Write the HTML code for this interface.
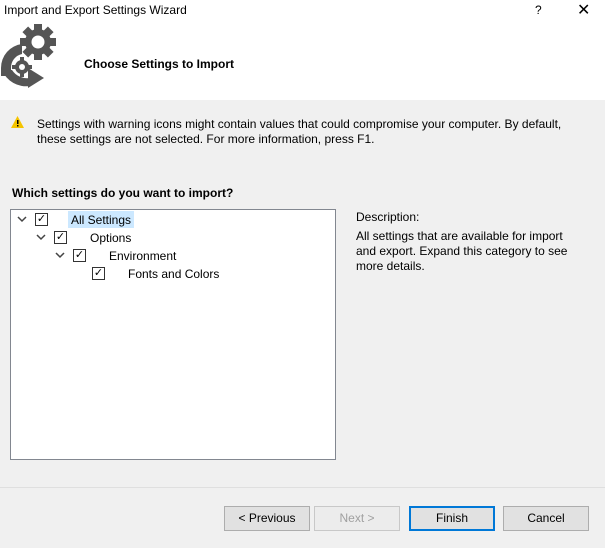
<!DOCTYPE html>
<html><head><style>
body{margin:0;width:605px;height:548px;background:#f0f0f0;font-family:"Liberation Sans",sans-serif;font-size:12px;color:#000;position:relative;overflow:hidden}
.a{position:absolute;white-space:nowrap}
.cb{position:absolute;width:11px;height:11px;border:1px solid #333;background:#fff;font-size:11px;line-height:11px;text-align:center}
.chev{position:absolute;width:12px;height:8px}
.btn{position:absolute;top:506px;height:23px;border:1px solid #adadad;background:#e1e1e1;text-align:center;line-height:23px;font-size:12px;box-sizing:border-box}
</style></head><body>
<div class="a" style="left:0;top:0;width:605px;height:100px;background:#fff"></div>
<div class="a" style="left:4px;top:3px">Import and Export Settings Wizard</div>
<div class="a" style="left:535px;top:3px">?</div>
<div class="a" style="left:577px;top:0px;font-size:16px">✕</div>
<svg class="a" style="left:0;top:24px" width="60" height="66" viewBox="0 0 60 66">
<g fill="#555">
<circle cx="38" cy="18" r="13"/>
<g transform="translate(38 18)"><rect x="-4" y="-18" width="8" height="36"/><rect x="-18" y="-4" width="36" height="8"/><rect x="-4" y="-18" width="8" height="36" transform="rotate(45)"/><rect x="-4" y="-18" width="8" height="36" transform="rotate(-45)"/></g>
<path d="M22 20 A24 24 0 0 0 1 44 L1 52 L11 52 L11 44 A14 14 0 0 1 22 30Z"/>
<path d="M2 46 A26 26 0 0 0 30 62 L30 54 A18 18 0 0 1 12 46Z"/>
<path d="M28 44 L44 54 L28 64 Z"/>
<circle cx="22" cy="43" r="7"/>
<g transform="translate(22 43)"><rect x="-2" y="-10" width="4" height="20"/><rect x="-10" y="-2" width="20" height="4"/></g>
</g>
<circle cx="38" cy="18" r="6.5" fill="#fff"/>
<circle cx="22" cy="43" r="3" fill="#fff"/>
</svg>
<div class="a" style="left:84px;top:57px;font-weight:bold">Choose Settings to Import</div>
<svg class="a" style="left:11px;top:116px" width="13" height="12"><path d="M6.5 0 L13 12 L0 12Z" fill="#f5c400"/><rect x="6" y="4" width="1.5" height="4" fill="#000"/><rect x="6" y="9" width="1.5" height="1.5" fill="#000"/></svg>
<div class="a" style="left:37px;top:117px;line-height:15px">Settings with warning icons might contain values that could compromise your computer. By default,<br>these settings are not selected. For more information, press F1.</div>
<div class="a" style="left:12px;top:186px;font-weight:bold">Which settings do you want to import?</div>
<div class="a" style="left:10px;top:209px;width:324px;height:249px;background:#fff;border:1px solid #828790"></div>
<div class="a" style="left:68px;top:211px;width:66px;height:17px;background:#cce8ff"></div>
<svg class="chev" style="left:16px;top:216px"><path d="M2 1 L6 5 L10 1" stroke="#444" stroke-width="1.5" fill="none"/></svg><div class="cb" style="left:35px;top:213px">✓</div><div class="a" style="left:71px;top:213px">All Settings</div>
<svg class="chev" style="left:35px;top:234px"><path d="M2 1 L6 5 L10 1" stroke="#444" stroke-width="1.5" fill="none"/></svg><div class="cb" style="left:54px;top:231px">✓</div><div class="a" style="left:90px;top:231px">Options</div>
<svg class="chev" style="left:54px;top:252px"><path d="M2 1 L6 5 L10 1" stroke="#444" stroke-width="1.5" fill="none"/></svg><div class="cb" style="left:73px;top:249px">✓</div><div class="a" style="left:109px;top:249px">Environment</div>
<div class="cb" style="left:92px;top:267px">✓</div><div class="a" style="left:128px;top:267px">Fonts and Colors</div>
<div class="a" style="left:356px;top:210px;line-height:15px">Description:</div>
<div class="a" style="left:356px;top:229px;line-height:15px">All settings that are available for import<br>and export. Expand this category to see<br>more details.</div>
<div class="a" style="left:0;top:487px;width:605px;height:1px;background:#dfdfdf"></div>
<div class="btn" style="left:224px;width:86px;top:506px;height:25px;line-height:23px">&lt; Previous</div>
<div class="btn" style="left:314px;width:86px;top:506px;height:25px;line-height:23px;color:#a0a0a0;border-color:#c8c8c8;background:#ececec">Next &gt;</div>
<div class="btn" style="left:409px;width:86px;top:506px;height:25px;line-height:21px;border:2px solid #0078d7">Finish</div>
<div class="btn" style="left:503px;width:86px;top:506px;height:25px;line-height:23px">Cancel</div>
</body></html>
